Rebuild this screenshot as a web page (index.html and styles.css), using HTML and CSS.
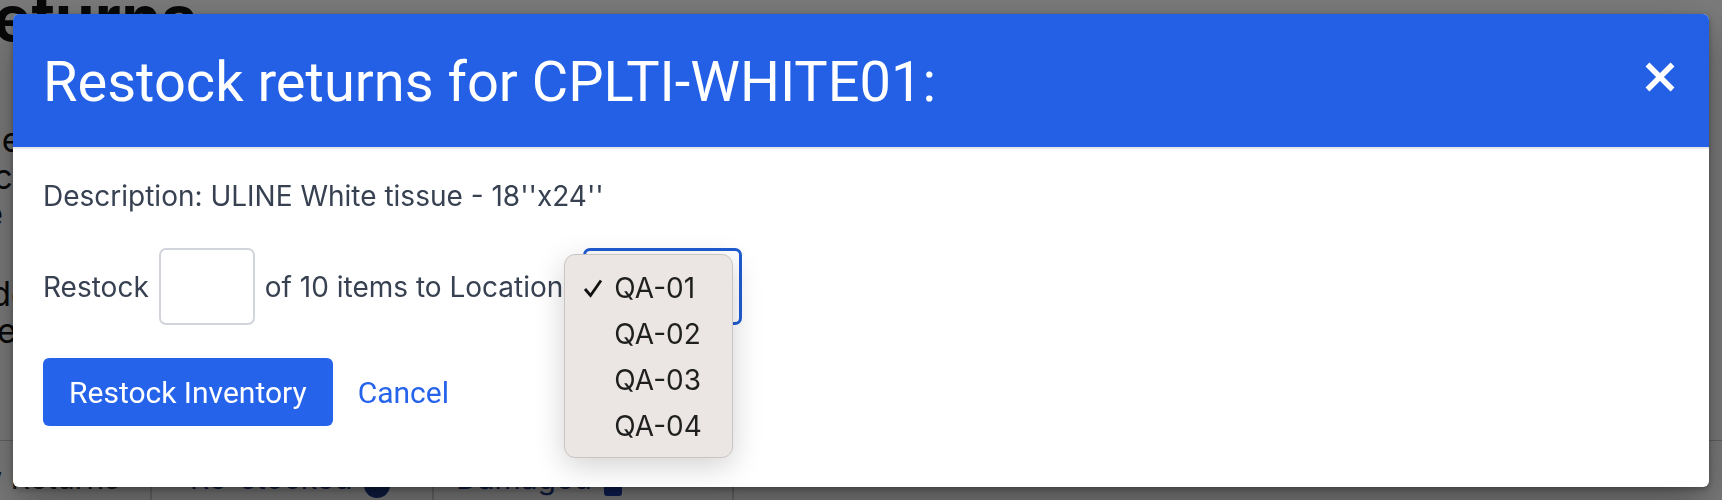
FILE: index.html
```html
<!DOCTYPE html>
<html>
<head>
<meta charset="utf-8">
<link rel="stylesheet" href="styles.css">
</head>
<body>
<div class="page">
  <h1 class="page-title">Returns</h1>
  <div class="page-lines">
    <p>Select a SKU below to restock</p>
    <p>Click a row to view returns</p>
    <p>the items for each location</p>
    <p class="gap">Order history and detail</p>
    <p>Check returned items</p>
  </div>
  <div class="tabs">
    <div class="tab tab-first">New Returns</div>
    <div class="tab tab-second">Re-stocked <span class="dot"></span></div>
    <div class="tab tab-third">Damaged <span class="sq"></span></div>
  </div>
</div>

<div class="backdrop">
  <div class="modal">
    <div class="modal-header">
      <h2 class="modal-title">Restock returns for CPLTI-WHITE01:</h2>
      <button class="close" aria-label="Close">
        <svg width="30" height="30" viewBox="0 0 30 30"><path d="M2.5 2.5 L27.5 27.5 M27.5 2.5 L2.5 27.5" stroke="#fff" stroke-width="5.5" fill="none"/></svg>
      </button>
    </div>
    <div class="modal-body">
      <p class="desc">Description: ULINE White tissue - 18''x24''</p>
      <div class="restock-row">
        <span>Restock</span>
        <span class="qty"></span>
        <span>of 10 items to Location</span>
        <div class="select-wrap">
          <div class="select"></div>
          <div class="menu">
            <div class="opt"><span class="check"><svg width="20" height="20" viewBox="0 0 20 20"><path d="M2 11 L7.5 17.5 L18 2.5" stroke="#111" stroke-width="2.8" fill="none" stroke-linejoin="miter"/></svg></span>QA-01</div>
            <div class="opt"><span class="check"></span>QA-02</div>
            <div class="opt"><span class="check"></span>QA-03</div>
            <div class="opt"><span class="check"></span>QA-04</div>
          </div>
        </div>
      </div>
      <div class="actions">
        <button class="primary">Restock Inventory</button>
        <a class="cancel">Cancel</a>
      </div>
    </div>
  </div>
</div>
</body>
</html>
```

FILE: styles.css
```css
* { box-sizing: border-box; }
html, body { margin: 0; padding: 0; }
body {
  width: 1722px;
  height: 500px;
  overflow: hidden;
  background: #fff;
  font-family: Inter, "Noto Sans", sans-serif;
  color: #1f2937;
}
.page {
  margin-left: -48px;
  height: 500px;
  display: flex;
  flex-direction: column;
}
.page-title {
  margin: -22px 0 0 0;
  font-size: 64px;
  font-weight: 700;
  color: #111;
  line-height: 80px;
}
.page-lines { margin-top: 63px; }
.page-lines p {
  margin: 0;
  font-size: 34px;
  line-height: 37px;
  color: #111;
  white-space: nowrap;
}
.page-lines .gap { margin-top: 43px; }
.tabs {
  margin-top: auto;
  height: 60px;
  border-top: 1px solid #ccc;
  display: flex;
  align-items: stretch;
}
.tab {
  font-size: 30px;
  height: 59px;
  display: flex;
  align-items: flex-end;
  padding-bottom: 4px;
  gap: 12px;
  white-space: nowrap;
  border-right: 2px solid #d4d4d4;
}
.tab-first { width: 200px; justify-content: flex-end; padding-right: 30px; color: #333; }
.tab-second { width: 282px; padding-left: 38px; color: #1e3a8a; }
.tab-third { width: 300px; padding-left: 22px; color: #1e3a8a; }
.dot { width: 26px; height: 26px; border-radius: 50%; background: #1e3a8a; display: inline-block; margin-bottom: -2px; }
.sq { width: 18px; height: 22px; border-radius: 3px; background: #1e40af; display: inline-block; }

.backdrop {
  position: fixed;
  inset: 0;
  background: rgba(0, 0, 0, 0.52);
  display: flex;
  justify-content: center;
  align-items: flex-start;
  padding-top: 14px;
}
.modal {
  width: 1696px;
  height: 473px;
  background: #fff;
  border-radius: 6px;
  box-shadow: 0 18px 45px rgba(0, 0, 0, 0.35), 0 2px 6px rgba(0, 0, 0, 0.3);
}
.modal-header {
  background: #2360e5;
  height: 135px;
  border-bottom: 2px solid #e5e7eb;
  border-radius: 6px 6px 0 0;
  display: flex;
  align-items: center;
  justify-content: space-between;
  padding: 0 34px 0 30px;
}
.modal-title {
  margin: 0;
  font-family: Roboto, "Liberation Sans", sans-serif;
  font-weight: 400;
  font-size: 56px;
  color: #fff;
  line-height: 1;
  padding-top: 2px;
}
.close {
  background: none;
  border: 0;
  padding: 0;
  width: 30px;
  height: 30px;
  display: flex;
  margin-bottom: 8px;
}
.modal-body {
  padding: 30px 30px 0 30px;
  font-size: 28px;
  color: #374151;
}
.desc {
  margin: 0;
  line-height: 34px;
}
.restock-row {
  margin-top: 35px;
  display: flex;
  align-items: center;
  gap: 10px;
  line-height: 34px;
}
.qty {
  width: 96px;
  height: 77px;
  border: 2px solid #d1d5db;
  border-radius: 7px;
  background: #fff;
}
.select-wrap {
  position: relative;
  margin-left: 10px;
}
.select {
  width: 159px;
  height: 77px;
  border: 3px solid #1f5bd1;
  border-radius: 7px;
  background: #fff;
}
.menu {
  position: absolute;
  left: -19px;
  top: 6px;
  width: 169px;
  height: 204px;
  background: #ebe6e3;
  border: 1px solid #c9c5c3;
  border-radius: 11px;
  box-shadow: 0 8px 30px rgba(0, 0, 0, 0.18);
  padding: 10px 0 0 0;
  font-family: Inter, "Noto Sans", sans-serif;
  font-size: 28px;
  color: #1f1f1f;
}
.opt {
  height: 46px;
  display: flex;
  align-items: center;
}
.check {
  width: 49px;
  padding-left: 18px;
  display: flex;
  align-items: center;
}
.actions {
  margin-top: 33px;
  display: flex;
  align-items: center;
  gap: 25px;
}
.primary {
  background: #2563eb;
  color: #fff;
  border: 0;
  border-radius: 6px;
  height: 68px;
  padding: 0 26px;
  font-family: Roboto, "Liberation Sans", sans-serif;
  font-size: 30px;
}
.cancel {
  font-family: Roboto, "Liberation Sans", sans-serif;
  font-size: 30px;
  color: #2563eb;
}
```
